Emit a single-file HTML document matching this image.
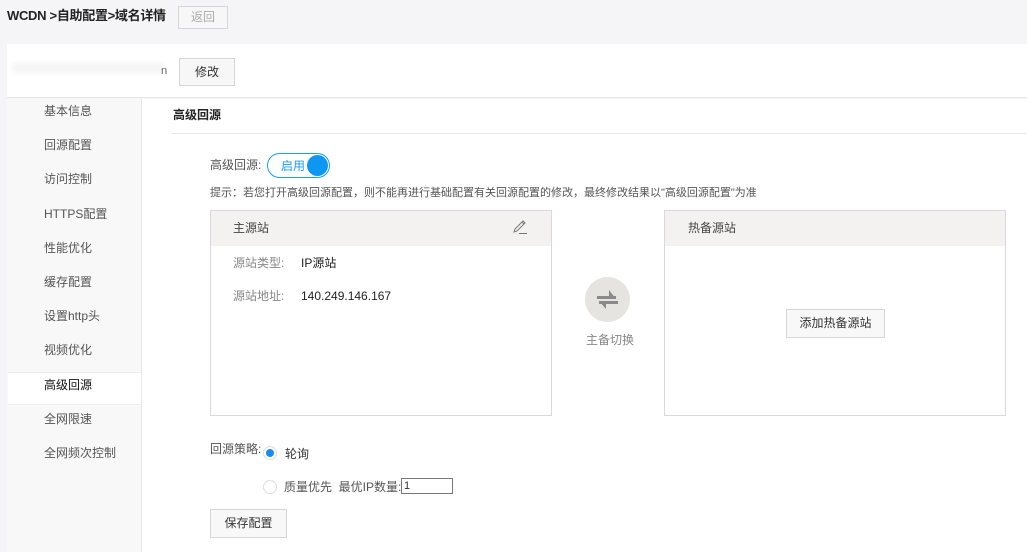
<!DOCTYPE html>
<html><head><meta charset="utf-8"><style>
*{box-sizing:border-box;margin:0;padding:0}
body{width:1027px;height:552px;background:#f5f5f7;font-family:"Liberation Sans","Noto Sans CJK SC",sans-serif;font-size:12px;line-height:14px;color:#333;position:relative;overflow:hidden}
.a{position:absolute;white-space:nowrap}
.btn{position:absolute;border:1px solid #d6d6d6;background:#f8f8f8;text-align:center;font-size:12px;color:#333}
</style></head><body>
<div class="a" style="left:7px;top:9px;font-size:13px;font-weight:bold;color:#222;letter-spacing:-0.3px">WCDN &gt;自助配置&gt;域名详情</div>
<div class="btn" style="left:178px;top:6px;width:50px;height:23px;line-height:21px;color:#aaa;background:#f7f7f7">返回</div>
<div class="a" style="left:7px;top:44px;width:1020px;height:54px;background:#fff;border-bottom:1px solid #e6e6e6"></div>
<div class="a" style="left:12px;top:63px;width:152px;height:10px;background:#f5f5f5;border-radius:6px;filter:blur(2px)"></div>
<div class="a" style="left:161px;top:64px;font-size:11px;color:#666">n</div>
<div class="btn" style="left:179px;top:58px;width:56px;height:28px;line-height:26px;background:#f7f7f7">修改</div>
<div class="a" style="left:7px;top:99px;width:135px;height:453px;background:#f8f8f8;border-right:1px solid #e8e8e8"></div>
<div class="a" style="left:142px;top:99px;width:885px;height:453px;background:#fff"></div>
<div class="a" style="left:8px;top:372px;width:133px;height:33px;background:#fff;border-top:1px solid #eee;border-bottom:1px solid #eee"></div>
<div class="a" style="left:44px;top:104px;color:#555">基本信息</div>
<div class="a" style="left:44px;top:138px;color:#555">回源配置</div>
<div class="a" style="left:44px;top:172px;color:#555">访问控制</div>
<div class="a" style="left:44px;top:207px;color:#555">HTTPS配置</div>
<div class="a" style="left:44px;top:241px;color:#555">性能优化</div>
<div class="a" style="left:44px;top:275px;color:#555">缓存配置</div>
<div class="a" style="left:44px;top:309px;color:#555">设置http头</div>
<div class="a" style="left:44px;top:343px;color:#555">视频优化</div>
<div class="a" style="left:44px;top:378px;color:#111">高级回源</div>
<div class="a" style="left:44px;top:412px;color:#555">全网限速</div>
<div class="a" style="left:44px;top:446px;color:#555">全网频次控制</div>
<div class="a" style="left:173px;top:108px;font-weight:bold;color:#222">高级回源</div>
<div class="a" style="left:172px;top:133px;width:855px;height:1px;background:#e8e8e8"></div>
<div class="a" style="left:210px;top:158px;color:#555">高级回源:</div>
<div class="a" style="left:267px;top:153px;width:63px;height:25px;border:1px solid #1a9ef5;border-radius:13px"></div>
<div class="a" style="left:281px;top:159px;color:#1a9ef5">启用</div>
<div class="a" style="left:307px;top:155px;width:21px;height:21px;border-radius:50%;background:#0d96f2"></div>
<div class="a" style="left:210px;top:186px;font-size:11px;color:#555">提示：若您打开高级回源配置，则不能再进行基础配置有关回源配置的修改，最终修改结果以"高级回源配置"为准</div>
<div class="a" style="left:210px;top:210px;width:342px;height:206px;border:1px solid #d8d8de"></div>
<div class="a" style="left:211px;top:211px;width:340px;height:35px;background:#f3f2f1"></div>
<div class="a" style="left:233px;top:221px;color:#444">主源站</div>
<svg class="a" style="left:512px;top:219px" width="16" height="16" viewBox="0 0 16 16"><path d="M2 13 L3 10 L11 2 L13 4 L5 12 Z M10 3 L12 5" fill="none" stroke="#777" stroke-width="1"/><path d="M7 14.5 H15" stroke="#777"/></svg>
<div class="a" style="left:233px;top:256px;color:#888">源站类型:</div>
<div class="a" style="left:301px;top:256px;color:#222">IP源站</div>
<div class="a" style="left:233px;top:289px;color:#888">源站地址:</div>
<div class="a" style="left:301px;top:289px;color:#222">140.249.146.167</div>
<div class="a" style="left:585px;top:277px;width:45px;height:45px;border-radius:50%;background:#e6e4e1"></div>
<svg class="a" style="left:595px;top:287px" width="25" height="25" viewBox="0 0 25 25"><rect x="2" y="9" width="19" height="3" fill="#8a8a8a"/><path d="M14 3 L21 12 H14 Z" fill="#8a8a8a"/><rect x="4" y="14" width="19" height="3" fill="#8a8a8a"/><path d="M4 14 H11 V22 Z" fill="#8a8a8a"/></svg>
<div class="a" style="left:586px;top:333px;color:#888">主备切换</div>
<div class="a" style="left:664px;top:210px;width:342px;height:206px;border:1px solid #d8d8de"></div>
<div class="a" style="left:665px;top:211px;width:340px;height:35px;background:#f3f2f1"></div>
<div class="a" style="left:688px;top:221px;color:#444">热备源站</div>
<div class="btn" style="left:786px;top:309px;width:99px;height:29px;line-height:27px">添加热备源站</div>
<div class="a" style="left:210px;top:442px;color:#555">回源策略:</div>
<div class="a" style="left:263px;top:446px;width:14px;height:14px;border-radius:50%;border:1px solid #ddd;background:#fff"></div>
<div class="a" style="left:266px;top:449px;width:8px;height:8px;border-radius:50%;background:#1a8cf0"></div>
<div class="a" style="left:285px;top:447px;color:#333">轮询</div>
<div class="a" style="left:263px;top:480px;width:14px;height:14px;border-radius:50%;border:1px solid #ddd;background:#fff"></div>
<div class="a" style="left:284px;top:480px;color:#555">质量优先 &nbsp;最优IP数量:</div>
<div class="a" style="left:401px;top:478px;width:52px;height:16px;border:1px solid #777;font-size:11px;padding-left:2px;line-height:14px">1</div>
<div class="btn" style="left:210px;top:509px;width:77px;height:29px;line-height:27px">保存配置</div>
</body></html>
